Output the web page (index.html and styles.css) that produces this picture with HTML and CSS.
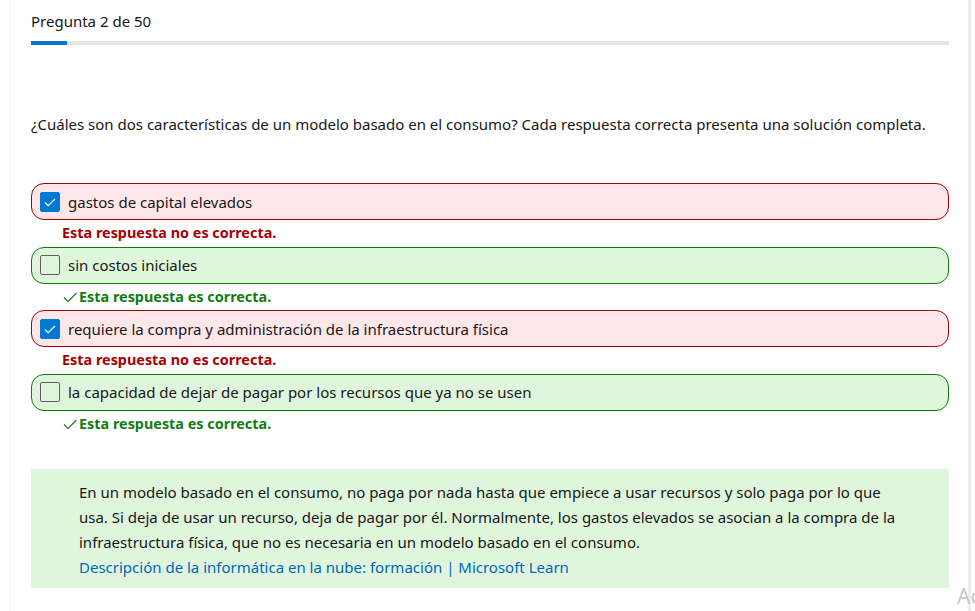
FILE: index.html
```html
<!DOCTYPE html>
<html lang="es">
<head>
<meta charset="utf-8">
<link rel="stylesheet" href="styles.css">
</head>
<body>
<div class="page">
  <div class="content">
    <div class="progress-label">Pregunta 2 de 50</div>
    <div class="progress"><div class="progress-fill" style="width:3.9%"></div></div>

    <p class="question">¿Cuáles son dos características de un modelo basado en el consumo? Cada respuesta correcta presenta una solución completa.</p>

    <div class="options">
      <div class="option wrong">
        <span class="box checked"><svg viewBox="0 0 20 20" width="20" height="20"><path d="M5 10.5l3.2 3.2L15 7" fill="none" stroke="#fff" stroke-width="1.2"/></svg></span>
        <span class="label">gastos de capital elevados</span>
      </div>
      <div class="feedback bad">Esta respuesta no es correcta.</div>

      <div class="option right">
        <span class="box"></span>
        <span class="label">sin costos iniciales</span>
      </div>
      <div class="feedback good"><svg class="tick" viewBox="0 0 16 16" width="16" height="16"><path d="M2 8.5l4 4L14.5 4" fill="none" stroke="#107c10" stroke-width="1.1"/></svg>Esta respuesta es correcta.</div>

      <div class="option wrong">
        <span class="box checked"><svg viewBox="0 0 20 20" width="20" height="20"><path d="M5 10.5l3.2 3.2L15 7" fill="none" stroke="#fff" stroke-width="1.2"/></svg></span>
        <span class="label">requiere la compra y administración de la infraestructura física</span>
      </div>
      <div class="feedback bad">Esta respuesta no es correcta.</div>

      <div class="option right">
        <span class="box"></span>
        <span class="label">la capacidad de dejar de pagar por los recursos que ya no se usen</span>
      </div>
      <div class="feedback good"><svg class="tick" viewBox="0 0 16 16" width="16" height="16"><path d="M2 8.5l4 4L14.5 4" fill="none" stroke="#107c10" stroke-width="1.1"/></svg>Esta respuesta es correcta.</div>
    </div>

    <div class="explanation">
      <p>En un modelo basado en el consumo, no paga por nada hasta que empiece a usar recursos y solo paga por lo que usa. Si deja de usar un recurso, deja de pagar por él. Normalmente, los gastos elevados se asocian a la compra de la infraestructura física, que no es necesaria en un modelo basado en el consumo.</p>
      <a href="#">Descripción de la informática en la nube: formación | Microsoft Learn</a>
    </div>
  </div>
</div>
<div class="watermark">Ac</div>
</body>
</html>
```

FILE: styles.css
```css
html, body {
  margin: 0;
  padding: 0;
  background: #ffffff;
  overflow: hidden;
}
body {
  font-family: "Noto Sans", "Open Sans", sans-serif;
  color: #171717;
  font-size: 15px;
  height: 611px;
  position: relative;
}
.page {
  margin-left: 9px;
  width: 962px;
  min-height: 611px;
  border-left: 1px solid #f2f2f2;
  border-right: 3px solid #ededed;
  box-sizing: border-box;
}
.content {
  padding: 10px 19px 0 21px;
}
.progress-label {
  line-height: 22px;
  height: 22px;
}
.progress {
  margin-top: 9px;
  height: 4px;
  background: #e6e6e6;
}
.progress-fill {
  height: 4px;
  background: #0078d4;
}
.question {
  margin: 68px 0 0 0;
  line-height: 22px;
}
.options {
  margin-top: 48px;
}
.option {
  display: flex;
  align-items: center;
  gap: 8px;
  height: 37px;
  box-sizing: border-box;
  border-radius: 13px;
  padding-left: 8px;
}
.option.wrong {
  background: #fde7e9;
  border: 1px solid #a80000;
}
.option.right {
  background: #dff6dd;
  border: 1px solid #107c10;
}
.box {
  width: 20px;
  height: 20px;
  box-sizing: border-box;
  border: 1px solid #616161;
  border-radius: 2px;
  background: transparent;
  display: flex;
}
.box.checked {
  background: #0078d4;
  border-color: #0078d4;
}
.box.checked svg {
  margin: -1px;
}
.label {
  line-height: 20px;
}
.feedback {
  height: 26.6px;
  line-height: 26px;
  padding-left: 31px;
  font-size: 14.4px;
  font-weight: 700;
  display: flex;
  align-items: center;
}
.feedback.bad {
  color: #a80000;
}
.feedback.good {
  color: #107c10;
}
.tick {
  margin-right: 1px;
}
.explanation {
  margin-top: 32px;
  background: #dff6dd;
  padding: 11px 50px 8px 48px;
  line-height: 25px;
}
.explanation p {
  margin: 0;
}
.explanation a {
  color: #0067b8;
  text-decoration: none;
}
.watermark {
  position: absolute;
  left: 957px;
  top: 582px;
  font-size: 21px;
  color: #c8c8c8;
}
```
